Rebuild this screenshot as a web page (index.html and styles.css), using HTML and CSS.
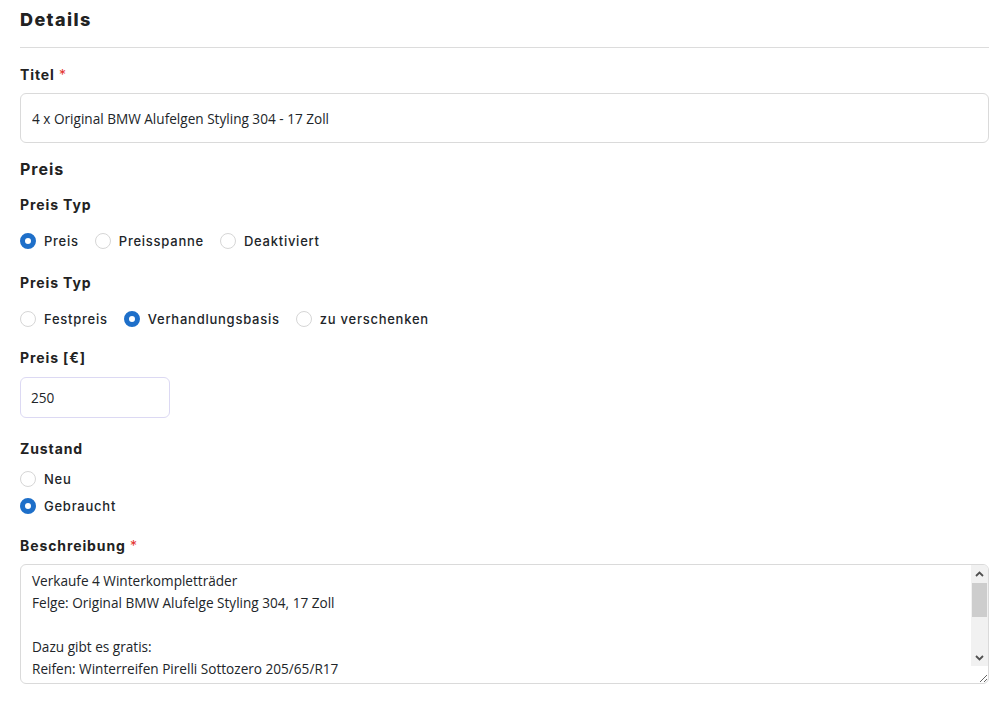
FILE: index.html
```html
<!DOCTYPE html>
<html lang="de">
<head>
<meta charset="utf-8">
<title>Details</title>
<link rel="stylesheet" href="styles.css">
</head>
<body>
<div class="form">
  <h2 class="title">Details</h2>
  <hr class="divider">
  <label class="label" for="titel">Titel <span class="req">*</span></label>
  <input id="titel" class="input input-wide" type="text" value="4 x Original BMW Alufelgen Styling 304 - 17 Zoll">

  <h3 class="section">Preis</h3>
  <div class="label">Preis Typ</div>
  <div class="radios">
    <label class="radio"><input type="radio" name="pt1" checked><span>Preis</span></label>
    <label class="radio"><input type="radio" name="pt1"><span>Preisspanne</span></label>
    <label class="radio"><input type="radio" name="pt1"><span>Deaktiviert</span></label>
  </div>

  <div class="label">Preis Typ</div>
  <div class="radios radios-last">
    <label class="radio"><input type="radio" name="pt2"><span>Festpreis</span></label>
    <label class="radio"><input type="radio" name="pt2" checked><span>Verhandlungsbasis</span></label>
    <label class="radio"><input type="radio" name="pt2"><span>zu verschenken</span></label>
  </div>

  <label class="label label-price" for="preis">Preis [€]</label>
  <input id="preis" class="input input-price" type="text" value="250">

  <div class="label label-zustand">Zustand</div>
  <div class="radios-col">
    <label class="radio"><input type="radio" name="zu"><span>Neu</span></label>
    <label class="radio"><input type="radio" name="zu" checked><span>Gebraucht</span></label>
  </div>

  <label class="label" for="beschreibung">Beschreibung <span class="req">*</span></label>
  <div class="textarea-wrap">
    <textarea id="beschreibung" class="textarea">Verkaufe 4 Winterkompletträder
Felge: Original BMW Alufelge Styling 304, 17 Zoll

Dazu gibt es gratis:
Reifen: Winterreifen Pirelli Sottozero 205/65/R17
Profiltiefe: ca. 5 mm
DOT: 2018

Die Felgen haben leichte Gebrauchsspuren.
Nur Abholung, kein Versand.</textarea>
    <div class="scrollbar" aria-hidden="true">
      <div class="sb-btn">
        <svg width="9" height="6" viewBox="0 0 9 6"><path d="M1 5 L4.5 1.5 L8 5" fill="none" stroke="#505050" stroke-width="1.8"/></svg>
      </div>
      <div class="sb-track"><div class="sb-thumb"></div></div>
      <div class="sb-btn">
        <svg width="9" height="6" viewBox="0 0 9 6"><path d="M1 1 L4.5 4.5 L8 1" fill="none" stroke="#505050" stroke-width="1.8"/></svg>
      </div>
    </div>
  </div>
</div>
</body>
</html>
```

FILE: styles.css
```css
* { box-sizing: border-box; }
html, body { margin: 0; padding: 0; background: #fff; }
body {
  font-family: "Inter", "Liberation Sans", sans-serif;
  color: #212529;
}
.form {
  padding: 9px 11px 20px 20px;
  display: flex;
  flex-direction: column;
  align-items: flex-start;
}
.title {
  margin: 0;
  font-size: 18px;
  font-weight: 800;
  letter-spacing: 1.4px;
  line-height: 22px;
  color: #222;
}
.divider {
  align-self: stretch;
  border: 0;
  border-top: 1px solid #dcdcdc;
  margin: 16px 0 18px;
}
.label {
  font-size: 14px;
  font-weight: 700;
  letter-spacing: 0.9px;
  line-height: 18px;
  color: #222;
  margin-bottom: 9px;
}
.label-price { margin-bottom: 10px; }
.label-zustand { margin-bottom: 5px; }
.req { color: #e3342f; font-weight: 400; }
.input {
  font-family: "Open Sans", "Noto Sans", sans-serif;
  font-size: 13.6px;
  color: #212529;
  border: 1px solid #dadada;
  border-radius: 6px;
  background: #fff;
  outline: none;
}
.input-wide {
  align-self: stretch;
  height: 50px;
  padding: 0 11px;
}
.input-price {
  width: 150px;
  height: 41px;
  padding: 0 10px;
  border-color: #dcd9f3;
  margin-bottom: 22px;
}
.section {
  margin: 16px 0 17px;
  font-size: 16px;
  font-weight: 700;
  letter-spacing: 1px;
  line-height: 20px;
  color: #222;
}
.radios {
  display: flex;
  gap: 16px;
  margin: 9px 0 24px;
}
.radios-last { margin-bottom: 21px; }
.radios-col {
  display: flex;
  flex-direction: column;
  gap: 9px;
  margin: 7px 0 22px;
}
.radio {
  display: flex;
  align-items: center;
  gap: 8px;
  font-size: 13px;
  font-weight: 500;
  letter-spacing: 0.75px;
  line-height: 18px;
  color: #212529;
}
.radio input {
  appearance: none;
  -webkit-appearance: none;
  margin: 0;
  width: 16px;
  height: 16px;
  border-radius: 50%;
  border: 1px solid #d6d6d6;
  background: #fff;
}
.radio input:checked {
  border: 5px solid #1e6fc9;
  background: #fff;
}
.textarea-wrap {
  align-self: stretch;
  position: relative;
  display: flex;
}
.textarea {
  flex: 1;
  height: 120px;
  padding: 5px 28px 5px 11px;
  font-family: "Open Sans", "Noto Sans", sans-serif;
  font-size: 13.6px;
  line-height: 22px;
  color: #212529;
  border: 1px solid #dadada;
  border-radius: 6px;
  resize: vertical;
  outline: none;
  overflow: hidden;
}
.scrollbar {
  position: absolute;
  top: 1px;
  right: 1px;
  bottom: 18px;
  width: 17px;
  display: flex;
  flex-direction: column;
  background: #f1f1f1;
  border-top-right-radius: 5px;
}
.sb-btn {
  height: 17px;
  display: flex;
  align-items: center;
  justify-content: center;
  flex: none;
}
.sb-track {
  flex: 1;
  padding-top: 1px;
}
.sb-thumb {
  height: 34px;
  margin: 0 1px;
  background: #cdcdcd;
}
```
